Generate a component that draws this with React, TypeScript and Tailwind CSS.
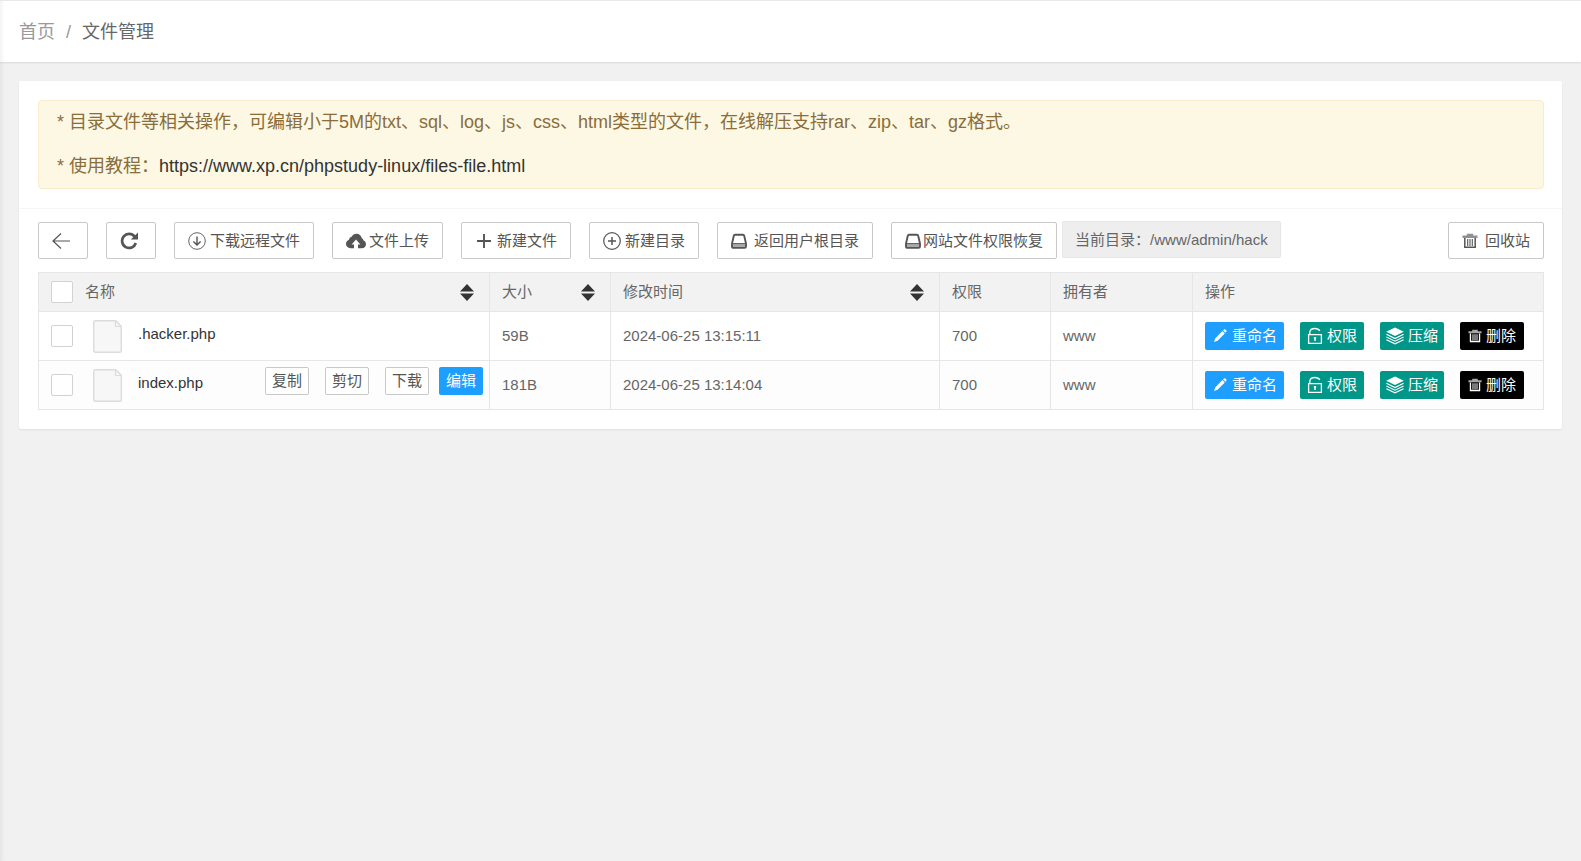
import type { ReactNode } from "react";
import clsx from "clsx";

const files = [
  { name: ".hacker.php", size: "59B", time: "2024-06-25 13:15:11", mode: "700", owner: "www", active: false },
  { name: "index.php", size: "181B", time: "2024-06-25 13:14:04", mode: "700", owner: "www", active: true },
];

function BackIcon() {
  return (
    <svg className="w-[18px] h-[18px]" viewBox="0 0 18 18" fill="none" stroke="currentColor" strokeWidth="1.2">
      <path d="M18 9H.8M9 1.5 1 9l8 7.5" />
    </svg>
  );
}

function RefreshIcon() {
  return (
    <svg className="w-[18px] h-[18px]" viewBox="0 0 18 18">
      <path d="M14.6 4.6A7 7 0 1 0 15.8 11" fill="none" stroke="currentColor" strokeWidth="2.7" />
      <path d="M18 .4V7.6H10.8z" fill="currentColor" />
    </svg>
  );
}

function DownIcon() {
  return (
    <svg className="w-[18px] h-[18px]" viewBox="0 0 18 18" fill="none" stroke="currentColor">
      <circle cx="9" cy="9" r="8.3" strokeWidth=".9" />
      <path d="M9 4.5v8.3M5.4 9.4 9 13l3.6-3.6" strokeWidth="1.4" />
    </svg>
  );
}

function UploadIcon() {
  return (
    <svg className="w-5 h-[18px]" viewBox="0 0 20 18" fill="currentColor">
      <path d="M4.6 16.2A4.4 4.4 0 0 1 0 12Q0 9 3 7.8 3.200 5.200 5.600 4.800 7.200 1.800 10.400 1.800 14.600 1.900 15.800 6.200 17.200 6.600 17.400 8.200 20 9.400 20 12A4.300 4.300 0 0 1 15.800 16.200H12V12.400H14.400L10 7.600 5.600 12.400H8V16.200z" />
    </svg>
  );
}

function PlusIcon() {
  return (
    <svg className="w-[18px] h-[18px]" viewBox="0 0 18 18" fill="none" stroke="currentColor" strokeWidth="1.9">
      <path d="M9 2v14M2 9h14" />
    </svg>
  );
}

function CirclePlusIcon() {
  return (
    <svg className="w-[18px] h-[18px]" viewBox="0 0 18 18" fill="none" stroke="currentColor">
      <circle cx="9" cy="9" r="8.3" strokeWidth="1.2" />
      <path d="M9 5v8M5 9h8" strokeWidth="1.5" />
    </svg>
  );
}

function DiskIcon() {
  return (
    <svg className="w-4 h-4" viewBox="0 0 16 16">
      <path d="M1.500 11H14.500V14.500H1.500z" fill="currentColor" opacity=".5" />
      <path d="M4 1.800H12Q13 1.800 13.200 2.800L15 10.600V13.400Q15 14.900 13.500 14.900H2.500Q1 14.900 1 13.400V10.600L2.800 2.800Q3 1.800 4 1.800z" fill="none" stroke="currentColor" strokeWidth="1.900" strokeLinejoin="round" />
      <path d="M1.500 10.600H14.500" stroke="currentColor" strokeWidth="1" />
    </svg>
  );
}

function TrashIcon({ className }: { className?: string }) {
  return (
    <svg className={clsx("h-4", className)} viewBox="0 0 16 16" fill="none" stroke="currentColor">
      <path d="M.5 3.700H15.500M4.800 2H11.200" strokeWidth="2.400" opacity=".65" />
      <path d="M2.800 5V14.300H13.200V5" strokeWidth="1.500" />
      <path d="M5.700 6V13M8 6V13M10.300 6V13" strokeWidth="1.100" />
    </svg>
  );
}

function PencilIcon() {
  return (
    <svg className="w-4 h-4" viewBox="0 0 16 16" fill="currentColor">
      <path d="M2 14 3.200 10.400 10.400 3.100 12.800 5.400 5.500 12.700zM11.100 2.400 12 1.500Q12.700 1 13.300 1.600L14.300 2.600Q14.800 3.200 14.300 3.800L13.500 4.700z" />
    </svg>
  );
}

function LockIcon() {
  return (
    <svg className="w-4 h-[18px]" viewBox="0 0 16 18" fill="none" stroke="currentColor" strokeWidth="1.300">
      <path d="M1.600 7.600H14.400V16.400H1.600zM2.800 7.500V5.400Q3.200 1.500 7.800 1.500 11.400 1.500 12.800 3.900" />
      <path d="M8 10.500V14M6.800 10.800H9.200" strokeWidth="1.500" />
    </svg>
  );
}

function LayersIcon() {
  return (
    <svg className="w-[18px] h-[18px]" viewBox="0 0 18 18" fill="none" stroke="currentColor" strokeWidth="1.200">
      <path d="M9 .5 17.800 4.800 9 9.100 .2 4.800z" fill="currentColor" stroke="none" />
      <path d="M.4 7.300 9 11.500 17.600 7.300M.4 10 9 14.200 17.600 10M.4 12.700 9 16.900 17.600 12.700" />
    </svg>
  );
}

function FileIcon() {
  return (
    <svg className="w-[29px] h-[33px]" viewBox="0 0 29 33" fill="#f7f7f7" stroke="#dcdcdc">
      <path d="M2.500 .7H22.500L28.300 6.500V30.500Q28.300 32.300 26.500 32.300H2.500Q.7 32.300 .7 30.500V2.500Q.7 .7 2.500 .7z" strokeWidth="1.400" />
      <path d="M22.500 .7V6.500H28.300z" strokeWidth="1.200" />
    </svg>
  );
}

function ToolButton({ className = "gap-1", children }: { className?: string; children: ReactNode }) {
  return (
    <button
      className={clsx(
        "flex h-[37px] shrink-0 items-center rounded-[2px] border border-[#c9c9c9] bg-white px-[13px] text-[#555] whitespace-nowrap cursor-pointer",
        className
      )}
    >
      {children}
    </button>
  );
}

function MiniButton({ children }: { children: ReactNode }) {
  return (
    <button className="h-7 rounded-[2px] border border-[#c9c9c9] bg-white px-[6px] text-[#555] cursor-pointer">
      {children}
    </button>
  );
}

function Check({ label }: { label: string }) {
  return (
    <input
      type="checkbox"
      aria-label={label}
      className="size-[22px] shrink-0 appearance-none rounded-[2px] border border-[#d2d2d2] bg-white checked:bg-[#009688]"
    />
  );
}

function SortArrows() {
  return (
    <button aria-label="排序" className="cursor-pointer">
      <svg className="w-[14px] h-[17px]" viewBox="0 0 14 17" fill="#333">
        <path d="M7 0 14 7.500H0zM7 17 14 9.500H0z" />
      </svg>
    </button>
  );
}

export default function App() {
  return (
    <div className="min-h-screen bg-[#f1f1f1] font-['Liberation_Sans','Noto_Sans_CJK_SC',sans-serif] text-[15px] leading-6 text-[#666] shadow-[inset_5px_0_5px_-4px_rgba(0,0,0,0.08)]">
      <header className="flex h-[62px] items-center border-t border-[#e8e8e8] bg-white px-[19px] text-[18px] shadow-[0_1px_2px_0_rgba(0,0,0,0.1),inset_5px_0_5px_-4px_rgba(0,0,0,0.08)]">
        <nav className="flex items-center">
          <a href="#" className="text-[#999]">首页</a>
          <span className="px-[11px] text-[#999]">/</span>
          <span>文件管理</span>
        </nav>
      </header>

      <main className="px-[19px] pt-[19px]">
        <section className="rounded-[2px] bg-white shadow-[0_1px_2px_0_rgba(0,0,0,0.08)]">
          <div className="border-b border-[#f6f6f6] py-[19px] pl-[19px] pr-[18px]">
            <div className="flex flex-col rounded-[4px] border border-[#faebcc] bg-[#fcf8e3] px-[18px] text-[18px] leading-[43px] text-[#8a6d3b]">
              <p className="h-11">* 目录文件等相关操作，可编辑小于5M的txt、sql、log、js、css、html类型的文件，在线解压支持rar、zip、tar、gz格式。</p>
              <p>
                * 使用教程：
                <a href="https://www.xp.cn/phpstudy-linux/files-file.html" className="text-[#333]">https://www.xp.cn/phpstudy-linux/files-file.html</a>
              </p>
            </div>
          </div>

          <div className="pt-3 pb-[19px] pl-[19px] pr-[18px]">
            <div className="flex items-center">
              <div className="flex items-center gap-[18px]">
                <button aria-label="返回" className="flex h-[37px] w-[50px] items-center justify-center rounded-[2px] border border-[#c9c9c9] pr-1 text-[#555] cursor-pointer">
                  <BackIcon />
                </button>
                <button aria-label="刷新" className="flex h-[37px] w-[50px] items-center justify-center rounded-[2px] border border-[#c9c9c9] pr-1 text-[#555] cursor-pointer">
                  <RefreshIcon />
                </button>
                <ToolButton><DownIcon />下载远程文件</ToolButton>
                <ToolButton className="gap-[3px]"><UploadIcon />文件上传</ToolButton>
                <ToolButton><PlusIcon />新建文件</ToolButton>
                <ToolButton><CirclePlusIcon />新建目录</ToolButton>
                <ToolButton className="gap-[7px]"><DiskIcon />返回用户根目录</ToolButton>
                <ToolButton className="gap-[2px]"><DiskIcon />网站文件权限恢复</ToolButton>
              </div>
              <span className="mb-[2px] ml-[5px] flex h-[37px] items-center rounded-[2px] border border-[#e6e6e6] bg-[#eee] px-3 whitespace-nowrap">
                当前目录：/www/admin/hack
              </span>
              <div className="ml-auto">
                <ToolButton className="gap-[7px]"><TrashIcon className="w-4" />回收站</ToolButton>
              </div>
            </div>

            <table className="mt-3 w-full table-fixed border-collapse text-left [&_td]:border [&_th]:border [&_td]:border-[#e6e6e6] [&_th]:border-[#e6e6e6] [&_th]:font-normal">
              <colgroup>
                <col />
                <col className="w-[121px]" />
                <col className="w-[329px]" />
                <col className="w-[111px]" />
                <col className="w-[142px]" />
                <col className="w-[351px]" />
              </colgroup>
              <thead>
                <tr className="h-[39px] bg-[#f2f2f2]">
                  <th className="pl-3 pr-[15px]">
                    <div className="flex items-center">
                      <Check label="全选" />
                      <span className="ml-3 flex-1">名称</span>
                      <SortArrows />
                    </div>
                  </th>
                  <th className="pl-3 pr-[15px]">
                    <div className="flex items-center justify-between">大小<SortArrows /></div>
                  </th>
                  <th className="pl-3 pr-[15px]">
                    <div className="flex items-center justify-between">修改时间<SortArrows /></div>
                  </th>
                  <th className="px-3">权限</th>
                  <th className="px-3">拥有者</th>
                  <th className="px-3">操作</th>
                </tr>
              </thead>
              <tbody>
                {files.map((file) => (
                  <tr key={file.name} className={clsx("h-[49px]", file.active && "bg-[#fdfdfd]")}>
                    <td className="pl-3 pr-[6px]">
                      <div className="flex items-center">
                        <Check label={file.name} />
                        <span className="ml-5"><FileIcon /></span>
                        <a href="#" className="mb-1 ml-4 text-[#333]">{file.name}</a>
                        {file.active && (
                          <div className="mb-2 ml-auto flex">
                            <div className="flex gap-4">
                              <MiniButton>复制</MiniButton>
                              <MiniButton>剪切</MiniButton>
                              <MiniButton>下载</MiniButton>
                            </div>
                            <button className="ml-[10px] h-7 rounded-[2px] bg-[#1e9fff] px-[7px] text-white cursor-pointer">编辑</button>
                          </div>
                        )}
                      </div>
                    </td>
                    <td className="px-3">{file.size}</td>
                    <td className="px-3">{file.time}</td>
                    <td className="px-3">{file.mode}</td>
                    <td className="px-3">{file.owner}</td>
                    <td className="px-3">
                      <div className="flex gap-4 text-white">
                        <button className="flex h-7 items-center gap-1 rounded-[2px] bg-[#1e9fff] px-[7px] cursor-pointer"><PencilIcon />重命名</button>
                        <button className="flex h-7 items-center gap-1 rounded-[2px] bg-[#009688] px-[7px] cursor-pointer"><LockIcon />权限</button>
                        <button className="flex h-7 items-center gap-1 rounded-[2px] bg-[#009688] px-[6px] cursor-pointer"><LayersIcon />压缩</button>
                        <button className="flex h-7 items-center gap-1 rounded-[2px] bg-black px-2 cursor-pointer"><TrashIcon className="w-[14px]" />删除</button>
                      </div>
                    </td>
                  </tr>
                ))}
              </tbody>
            </table>
          </div>
        </section>
      </main>
    </div>
  );
}
